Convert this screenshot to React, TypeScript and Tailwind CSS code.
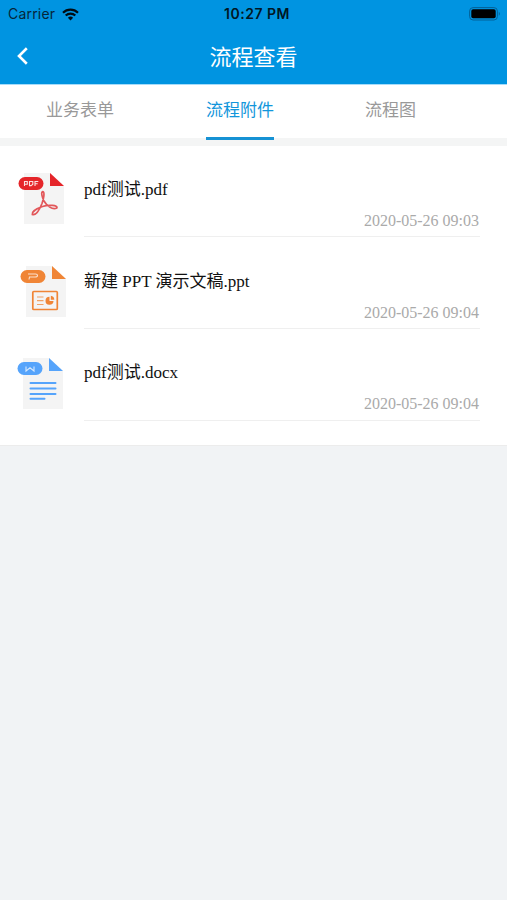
import React from "react";

const sans = "font-['Noto_Sans_CJK_SC',sans-serif]";
const serif = "font-['Liberation_Serif','Noto_Sans_CJK_SC',serif]";

type Kind = "pdf" | "ppt" | "doc";

const files: { kind: Kind; name: string; date: string; row: string; body: string; icon: string }[] = [
  { kind: "pdf", name: "pdf测试.pdf", date: "2020-05-26 09:03", row: "h-[91px] pt-[26px]", body: "pt-px", icon: "ml-[18px]" },
  { kind: "ppt", name: "新建 PPT 演示文稿.ppt", date: "2020-05-26 09:04", row: "h-[92px] pt-[28px]", body: "", icon: "ml-[20px]" },
  { kind: "doc", name: "pdf测试.docx", date: "2020-05-26 09:04", row: "h-[92px] pt-[27px]", body: "", icon: "mt-px ml-[17px]" },
];

const colors: Record<Kind, string> = { pdf: "#e5252a", ppt: "#f08536", doc: "#56a4fb" };

function FileIcon({ kind }: { kind: Kind }) {
  const c = colors[kind];
  return (
    <svg width="48" height="52" viewBox="0 0 48 52" fill="none">
      <path d="M6 1H32L46 14V52H6Z" fill="#f4f4f4" />
      <path d="M32 1L46 14H32Z" fill={c} />
      <rect x="0.5" y="5" width="25" height="13" rx="6.5" fill={c} />
      {kind === "pdf" && (
        <>
          <path d="M6.5 14V9.5H9.3V12.3H6.5M11.5 9.5V13.6H13.1L14.8 12.3V9.5ZM17 14V9.5H20.3M17 11.8H19.7" stroke="#fff" strokeWidth="1.1" opacity="0.85" />
          <path d="M24.8 19.5C22.6 20 24.2 25.5 26 29C28.5 33.5 34.5 38.5 38.8 36C40.5 33 30 32.5 24.5 34.5C19.5 36.2 13.5 39.5 14.3 42.5C18.2 44 22.2 36 24 31.5C25.7 26.8 27 20 24.8 19.5Z" stroke="#e2575a" strokeWidth="1.7" />
        </>
      )}
      {kind === "ppt" && (
        <>
          <path d="M8 9H15.5Q17.5 9 17.5 10.5Q17.5 12 15 12H9.5L9 14.5" stroke="#fff" strokeWidth="1.1" opacity="0.75" />
          <rect x="12.8" y="26.5" width="24.5" height="18" rx="1" stroke={c} strokeWidth="1.7" />
          <path d="M17 32H23.5M17 35.7H23.5M17 39.5H23.5" stroke={c} strokeWidth="1.2" opacity="0.75" />
          <path d="M29.5 31.8A4 4 0 1 0 33.5 36H29.5Z" fill={c} />
          <path d="M30.8 30.8A4 4 0 0 1 34.3 34.8H30.8Z" fill={c} />
        </>
      )}
      {kind === "doc" && (
        <>
          <path d="M9 9.5V14L13 10.8L17 14V9.5" stroke="#fff" strokeWidth="1.1" opacity="0.75" />
          <path d="M13.5 26H38.5M13.5 31.5H38.5M13.5 37H38.5M13.5 41.7H27.5" stroke={c} strokeWidth="2" strokeLinecap="round" />
        </>
      )}
    </svg>
  );
}

function StatusBar() {
  return (
    <div className="grid h-[28px] grid-cols-3 items-center font-['Inter',sans-serif] text-[14px] leading-[28px] text-[#06263a]">
      <div className="flex items-center pl-[8px]">
        <span className="tracking-[0.2px]">Carrier</span>
        <svg className="ml-[7px]" width="17" height="13" viewBox="0 0 17 13" fill="none" stroke="#000c14" strokeWidth="2.2">
          <path d="M1 4.7A10.8 10.8 0 0 1 16 4.7" />
          <path d="M3.7 7.5A7 7 0 0 1 13.3 7.5" />
          <path d="M8.5 12.5L5.9 9.8A3.8 3.8 0 0 1 11.1 9.8Z" fill="#000c14" stroke="none" />
        </svg>
      </div>
      <span className="pl-[7px] text-center font-semibold tracking-[0.5px] text-[#001725]">10:27 PM</span>
      <div className="flex justify-end pr-[6px]">
        <svg width="32" height="14" viewBox="0 0 32 14">
          <rect x="0.6" y="0.6" width="27.8" height="12.4" rx="3.5" fill="none" stroke="#036197" strokeWidth="1" />
          <rect x="2.3" y="2.3" width="24.4" height="9" rx="1.8" fill="#000" />
          <path d="M29.8 4.8Q32 6.8 29.8 8.8Z" fill="#036197" />
        </svg>
      </div>
    </div>
  );
}

export default function App() {
  return (
    <div className={`flex min-h-[900px] w-full flex-col bg-[#f1f3f5] ${sans}`}>
      <header className="h-[85px] border-b border-[#a6dcfa] bg-[#0094e1]">
        <StatusBar />
        <div className="grid h-[56px] grid-cols-[40px_1fr_40px] items-center">
          <svg className="ml-[16px]" width="13" height="18" viewBox="0 0 13 18" fill="none" stroke="#fff" strokeWidth="2.6">
            <path d="M10.8 1.3L3 9L10.8 16.7" />
          </svg>
          <h1 className="pb-[2px] text-center text-[22px] leading-[54px] font-normal text-white">流程查看</h1>
        </div>
      </header>

      <nav className="flex h-[61px] border-b-[8px] border-[#f4f5f5] bg-white text-[17px] leading-[47px] text-[#999]">
        <div className="w-[160px] pl-[46px]">业务表单</div>
        <div className="w-[160px] pl-[46px] text-[#1296db]">
          <div className="h-[55px] w-[68px] border-b-[3px] border-[#1692d4]">流程附件</div>
        </div>
        <div className="pl-[45px]">流程图</div>
      </nav>

      <main className="h-[300px] border-b border-[#ececec] bg-white">
        {files.map((f) => (
          <div key={f.name} className={`flex ${f.row}`}>
            <div className="w-[84px] shrink-0">
              <div className={f.icon}>
                <FileIcon kind={f.kind} />
              </div>
            </div>
            <div className={`mr-[27px] flex flex-1 flex-col border-b border-[#efefef] ${serif} ${f.body}`}>
              <div className="h-[34px] text-[17px] leading-[34px] text-[#111]">{f.name}</div>
              <div className="pr-px text-right text-[16px] leading-[27px] text-[#aaa]">{f.date}</div>
            </div>
          </div>
        ))}
      </main>
    </div>
  );
}
